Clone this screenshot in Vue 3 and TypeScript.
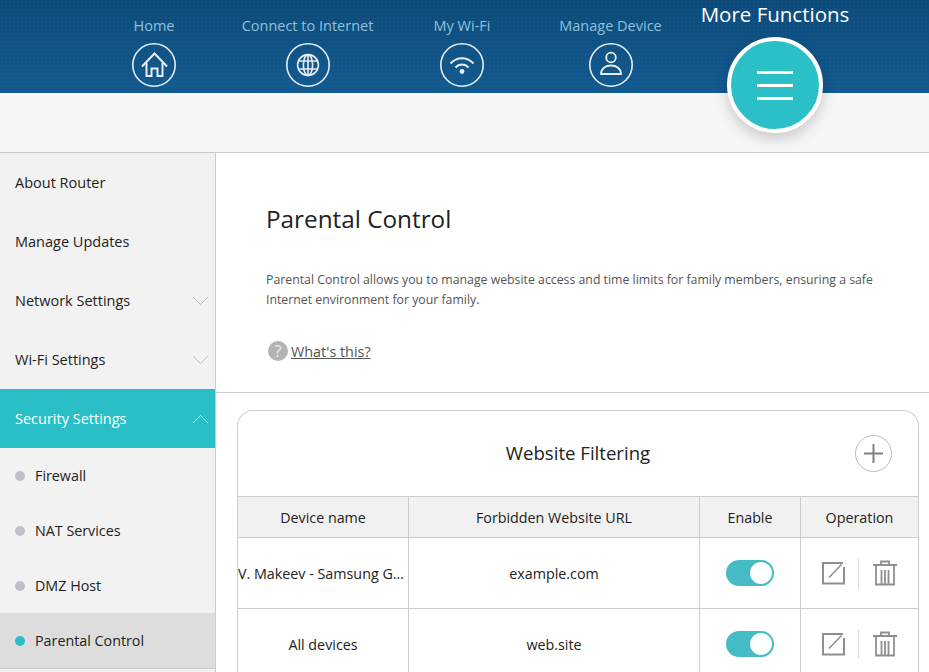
<script setup lang="ts">
const navItems = [
  { label: 'Home', icon: 'home' },
  { label: 'Connect to Internet', icon: 'globe' },
  { label: 'My Wi-Fi', icon: 'wifi' },
  { label: 'Manage Device', icon: 'user' },
]

const menuItems = [
  { label: 'About Router', arrow: false },
  { label: 'Manage Updates', arrow: false },
  { label: 'Network Settings', arrow: true },
  { label: 'Wi-Fi Settings', arrow: true },
]

const subItems = [
  { label: 'Firewall', active: false },
  { label: 'NAT Services', active: false },
  { label: 'DMZ Host', active: false },
  { label: 'Parental Control', active: true },
]

const columns = ['Device name', 'Forbidden Website URL', 'Enable', 'Operation']

const rows = [
  { device: 'V. Makeev - Samsung Galaxy S9', url: 'example.com' },
  { device: 'All devices', url: 'web.site' },
]
</script>

<template>
  <div class="page">
    <header class="top">
      <nav class="nav">
        <a v-for="item in navItems" :key="item.label" class="nav-item">
          <span class="nav-label">{{ item.label }}</span>
          <span class="nav-icon">
            <svg width="44" height="44" viewBox="0 0 44 44" fill="none" stroke="#e6eef4" stroke-width="1.6">
              <circle cx="22" cy="22" r="21.2" />
              <template v-if="item.icon === 'home'">
                <path d="M10 23.5 L22.5 10.5 L35 23.5" stroke-width="2" />
                <path d="M14.5 20 V33 H19.5 V25.5 H25.5 V33 H30.5 V20" stroke-width="2" />
              </template>
              <template v-else-if="item.icon === 'globe'">
                <circle cx="22" cy="22" r="10.4" />
                <ellipse cx="22" cy="22" rx="4.6" ry="10.4" />
                <path d="M22 11.6 V32.4 M12.6 18 H31.4 M12.6 26 H31.4" />
              </template>
              <template v-else-if="item.icon === 'wifi'">
                <path d="M10.5 20.5 C17 13.5 27 13.5 33.5 20.5" stroke-width="2" />
                <path d="M15.5 24.5 C19 20.5 25 20.5 28.5 24.5" stroke-width="2" />
                <circle cx="22" cy="28.5" r="2.4" fill="#e6eef4" stroke="none" />
              </template>
              <template v-else>
                <circle cx="22" cy="14.5" r="4.8" stroke-width="1.8" />
                <path d="M12 31 C12 25.5 16.5 22.5 22 22.5 C27.5 22.5 32 25.5 32 31 Z" stroke-width="1.8" />
              </template>
            </svg>
          </span>
        </a>
        <a class="nav-item more">
          <span class="more-label">More Functions</span>
          <span class="more-btn">
            <i></i><i></i><i></i>
          </span>
        </a>
      </nav>
    </header>
    <div class="subbar"></div>

    <div class="body">
      <aside class="side">
        <div v-for="item in menuItems" :key="item.label" class="menu-row">
          <span>{{ item.label }}</span>
          <svg v-if="item.arrow" width="17" height="10" viewBox="0 0 17 10" fill="none" stroke="#bdbdbd">
            <path d="M1 1 L8.5 8.5 L16 1" />
          </svg>
        </div>
        <div class="menu-row open">
          <span>Security Settings</span>
          <svg width="17" height="10" viewBox="0 0 17 10" fill="none" stroke="#d4f2f4">
            <path d="M1 9 L8.5 1.5 L16 9" />
          </svg>
        </div>
        <div v-for="sub in subItems" :key="sub.label" class="sub-row" :class="{ active: sub.active }">
          <span class="dot"></span>
          <span>{{ sub.label }}</span>
        </div>
      </aside>

      <main class="main">
        <section class="intro">
          <h1>Parental Control</h1>
          <p>Parental Control allows you to manage website access and time limits for family members, ensuring a safe Internet environment for your family.</p>
          <div class="help">
            <span class="help-icon">?</span>
            <a>What's this?</a>
          </div>
        </section>

        <section class="card">
          <div class="card-head">
            <h2>Website Filtering</h2>
            <span class="add">
              <svg width="37" height="37" viewBox="0 0 37 37" fill="none" stroke="#808080">
                <circle cx="18.5" cy="18.5" r="18" stroke="#bbb" />
                <path d="M9 18.5 H28 M18.5 9 V28" stroke-width="2" />
              </svg>
            </span>
          </div>
          <div class="grid head-row">
            <div v-for="col in columns" :key="col" class="cell">{{ col }}</div>
          </div>
          <div v-for="row in rows" :key="row.url" class="grid body-row">
            <div class="cell"><span class="clip">{{ row.device }}</span></div>
            <div class="cell">{{ row.url }}</div>
            <div class="cell">
              <span class="toggle"><span class="knob"></span></span>
            </div>
            <div class="cell ops">
              <svg width="24" height="24" viewBox="0 0 24 24" fill="none" stroke="#8f8f8f" stroke-width="2">
                <path d="M23 6 V22.5 H2 V2 H22" />
                <path d="M8 16.5 L20.5 3.5" stroke-width="1.6" />
              </svg>
              <span class="sep"></span>
              <svg width="26" height="26" viewBox="0 0 26 26" fill="none" stroke="#8f8f8f" stroke-width="1.8">
                <path d="M1 5 H25 M9 4.5 V1.5 H17 V4.5" />
                <path d="M4 5.5 V24.5 H22 V5.5 M9.5 10 V24 M13 10 V24 M16.5 10 V24" />
              </svg>
            </div>
          </div>
        </section>
      </main>
    </div>
  </div>
</template>

<style>
html,
body {
  margin: 0;
  background: #fff;
}
</style>

<style scoped>
.page {
  width: 929px;
  height: 672px;
  overflow: hidden;
  font-family: "Open Sans", "Liberation Sans", sans-serif;
  color: #222;
  font-size: 14.3px;
}

.top {
  height: 93px;
  background-color: #0f5386;
  background-image:
    radial-gradient(rgba(255, 255, 255, 0.018) 1px, transparent 1px),
    linear-gradient(#0d4b7b, #125a8f);
  background-size: 4px 4px, 100% 100%;
}

.nav {
  display: grid;
  grid-template-columns: 152px 155px 154px 143px 186px;
  padding-left: 78px;
}

.nav-item {
  display: flex;
  flex-direction: column;
  align-items: center;
}

.nav-label {
  margin-top: 16px;
  height: 20px;
  line-height: 20px;
  font-size: 14.5px;
  color: #8ec0dc;
  white-space: nowrap;
}

.nav-icon {
  display: block;
  height: 44px;
  margin-top: 7px;
}

.more {
  position: relative;
  z-index: 2;
}

.more-label {
  height: 28px;
  line-height: 28px;
  font-size: 20.5px;
  color: #fff;
  white-space: nowrap;
}

.more-btn {
  box-sizing: border-box;
  width: 96px;
  height: 96px;
  margin-top: 9px;
  border: 4px solid #fff;
  border-radius: 50%;
  background: #2bc0c8;
  box-shadow: 0 6px 14px rgba(0, 0, 0, 0.18);
  display: flex;
  flex-direction: column;
  align-items: center;
  justify-content: center;
  gap: 10px;
}

.more-btn i {
  display: block;
  width: 36px;
  height: 3px;
  background: #fff;
}

.subbar {
  height: 59px;
  background: #f6f6f6;
  border-bottom: 1px solid #ccc;
}

.body {
  display: flex;
}

.side {
  box-sizing: border-box;
  width: 216px;
  flex: none;
  height: 520px;
  background: #f2f2f2;
  border-right: 1px solid #ccc;
}

.menu-row {
  height: 59px;
  display: flex;
  align-items: center;
  justify-content: space-between;
  padding: 0 6px 0 15px;
  font-size: 14.5px;
}

.menu-row.open {
  background: #2abfc6;
  color: #fff;
}

.sub-row {
  height: 55px;
  display: flex;
  align-items: center;
  gap: 10px;
  padding-left: 15px;
}

.sub-row.active {
  background: #dddddd;
  border-bottom: 1px solid #ccc;
}

.dot {
  width: 10px;
  height: 10px;
  border-radius: 50%;
  background: #bfc1c9;
}

.active .dot {
  background: #2abfc6;
}

.main {
  flex: 1;
  min-width: 0;
}

.intro {
  box-sizing: border-box;
  height: 240px;
  padding: 49px 40px 0 50px;
  border-bottom: 1px solid #ccc;
}

h1 {
  margin: 0;
  font-size: 24.3px;
  font-weight: 400;
  line-height: 34px;
  color: #222;
}

.intro p {
  margin: 34px 0 0;
  font-size: 12.3px;
  line-height: 20px;
  color: #555;
}

.help {
  display: flex;
  align-items: center;
  gap: 3px;
  margin-top: 31px;
  margin-left: 2px;
  color: #555;
  font-size: 14.4px;
}

.help-icon {
  width: 20px;
  height: 20px;
  border-radius: 50%;
  background: #b3b3b3;
  color: #eee;
  font-size: 16px;
  line-height: 20px;
  text-align: center;
}

.help a {
  text-decoration: underline;
}

.card {
  margin: 17px 10px 0 21px;
  border: 1px solid #ccc;
  border-bottom: 0;
  border-radius: 16px 16px 0 0;
}

.card-head {
  box-sizing: border-box;
  height: 85px;
  padding-bottom: 2px;
  position: relative;
  display: flex;
  align-items: center;
  justify-content: center;
}

h2 {
  margin: 0;
  font-size: 18.6px;
  font-weight: 400;
}

.add {
  position: absolute;
  right: 26px;
  top: 24px;
  height: 37px;
}

.grid {
  display: grid;
  grid-template-columns: 170px 291px 101px 1fr;
  border-top: 1px solid #ccc;
}

.head-row {
  height: 40px;
  background: #f1f1f1;
}

.body-row {
  height: 70px;
}

.cell {
  display: flex;
  align-items: center;
  justify-content: center;
  min-width: 0;
  border-left: 1px solid #ccc;
}

.cell:first-child {
  border-left: 0;
}

.clip {
  display: block;
  width: 100%;
  overflow: hidden;
  white-space: nowrap;
  text-overflow: ellipsis;
  text-align: center;
}

.toggle {
  box-sizing: border-box;
  width: 48px;
  height: 26px;
  border-radius: 13px;
  background: #45bcc4;
  display: flex;
  align-items: center;
  justify-content: flex-end;
  padding-right: 2px;
}

.knob {
  width: 22px;
  height: 22px;
  border-radius: 50%;
  background: #fff;
}

.ops {
  gap: 13px;
}

.sep {
  width: 1px;
  height: 30px;
  background: #ddd;
}
</style>
